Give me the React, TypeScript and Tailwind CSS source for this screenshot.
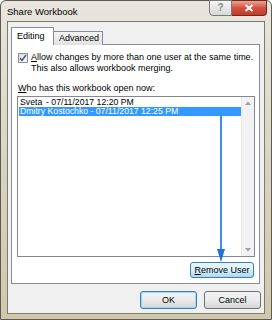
import React from "react";

function Checkbox() {
  return (
    <div className="mt-px w-[10px] h-[10px] shrink-0 border border-[#8e8f8f] bg-gradient-to-br from-[#dcdcdc] to-[#fafafa] flex items-center justify-center">
      <svg width="8" height="8" viewBox="0 0 8 8">
        <path d="M1 4.2 L3 6.4 L7 1" fill="none" stroke="#3b4f8a" strokeWidth="1.4" />
      </svg>
    </div>
  );
}

export default function App() {
  return (
    <div className="w-[272px] h-[320px] overflow-hidden bg-white font-['Liberation_Sans',Arial,sans-serif] text-[9px] text-black">
      <div className="w-[272px] h-[320px] rounded-t-[6px] border border-[#5e5a4e] bg-gradient-to-b from-[#e8e6df] via-[#d9d4c2] to-[#cfc8ad] flex flex-col">
        {/* title bar */}
        <div className="h-[20px] flex items-start justify-between shrink-0">
          <div className="pl-[6px] pt-[5px] leading-[11px] text-[9.5px] text-black">Share Workbook</div>
          <div className="flex -mt-px mr-[4px]">
            <div className="w-[23px] h-[16px] rounded-bl-[4px] border border-[#7a7a7a] bg-gradient-to-b from-[#f6f6f6] to-[#d8d8d8] flex items-center justify-center text-[10px] font-bold text-[#8a8a8a] leading-none">?</div>
            <div className="w-[35px] h-[16px] rounded-br-[4px] border border-l-0 border-[#6e2a20] bg-gradient-to-b from-[#e8a393] via-[#d2513f] to-[#c33a26] flex items-center justify-center">
              <svg width="10" height="8" viewBox="0 0 10 8">
                <path d="M1.5 1 L8.5 7 M8.5 1 L1.5 7" stroke="white" strokeWidth="2" />
              </svg>
            </div>
          </div>
        </div>
        {/* client */}
        <div className="mx-[6px] mb-[5px] flex-1 border border-[#7d7a6e] bg-[#f0f0f0] flex flex-col">
          {/* tabs */}
          <div className="ml-[3px] mt-[5px] flex items-end relative z-10 -mb-px">
            <div className="w-[43px] h-[18px] bg-white border border-b-0 border-[#898c95] pl-[5px] pt-[3px] leading-[11px]">Editing</div>
            <div className="-ml-px w-[50px] h-[14px] bg-gradient-to-b from-[#f3f3f3] to-[#e1e1e1] border border-b-0 border-[#898c95] pl-[5px] pt-[1px] leading-[11px]">Advanced</div>
          </div>
          {/* panel */}
          <div className="ml-[3px] w-[249px] h-[240px] border border-[#898c95] bg-white flex flex-col relative">
            <div className="mt-[7px] ml-[6px] flex items-start gap-[3px]">
              <Checkbox />
              <div className="leading-[11px]">
                <div>
                  <span className="underline">A</span>llow changes by more than one user at the same time.
                </div>
                <div>This also allows workbook merging.</div>
              </div>
            </div>
            <div className="mt-[9px] ml-[6px] leading-[11px]">
              <span className="underline">W</span>ho has this workbook open now:
            </div>
            <div className="mt-[2px] ml-[5px] w-[238px] h-[161px] border border-[#828790] bg-white flex">
              <div className="flex-1 pt-px pl-px text-[8.7px]">
                <div className="h-[9px] leading-[9px] pl-px flex">
                  <span className="w-[26px]">Sveta</span>
                  <span>- 07/11/2017 12:20 PM</span>
                </div>
                <div className="h-[9px] leading-[9px] pl-px bg-[#3399ff] text-white">Dmitry Kostochko - 07/11/2017 12:25 PM</div>
              </div>
              <div className="w-[13px] bg-[#f2f2f2] border-l border-[#e8e8e8] flex flex-col justify-between items-center py-[4px]">
                <svg width="6" height="4" viewBox="0 0 6 4"><path d="M0 4 L3 0.5 L6 4 Z" fill="#a0a0a0" /></svg>
                <svg width="6" height="4" viewBox="0 0 6 4"><path d="M0 0 L3 3.5 L6 0 Z" fill="#a0a0a0" /></svg>
              </div>
            </div>
            <div className="mt-[5px] mr-[5px] self-end w-[64px] h-[16px] rounded-[3px] border border-[#3c7fb1] bg-gradient-to-b from-[#eaf6fd] via-[#d9f0fc] to-[#a7d9f5] flex items-center justify-center leading-none">
              <span className="underline">R</span>emove User
            </div>
            <svg className="absolute left-[204px] top-[70px]" width="10" height="148" viewBox="0 0 10 148">
              <line x1="5" y1="0" x2="5" y2="136" stroke="#3b8eea" strokeWidth="2" />
              <path d="M1 134 L9 134 L5 147 Z" fill="#1f74d9" />
            </svg>
          </div>
          {/* buttons */}
          <div className="mt-[7px] mr-[3px] flex justify-end gap-[7px]">
            <div className="w-[57px] h-[18px] rounded-[3px] border border-[#3c7fb1] shadow-[inset_0_0_0_1px_#9fd6f5] bg-gradient-to-b from-[#f2f2f2] via-[#ebebeb] to-[#d6d6d6] flex items-center justify-center leading-none">OK</div>
            <div className="w-[57px] h-[18px] rounded-[3px] border border-[#707070] bg-gradient-to-b from-[#f2f2f2] via-[#ebebeb] to-[#d6d6d6] flex items-center justify-center leading-none">Cancel</div>
          </div>
        </div>
      </div>
    </div>
  );
}
